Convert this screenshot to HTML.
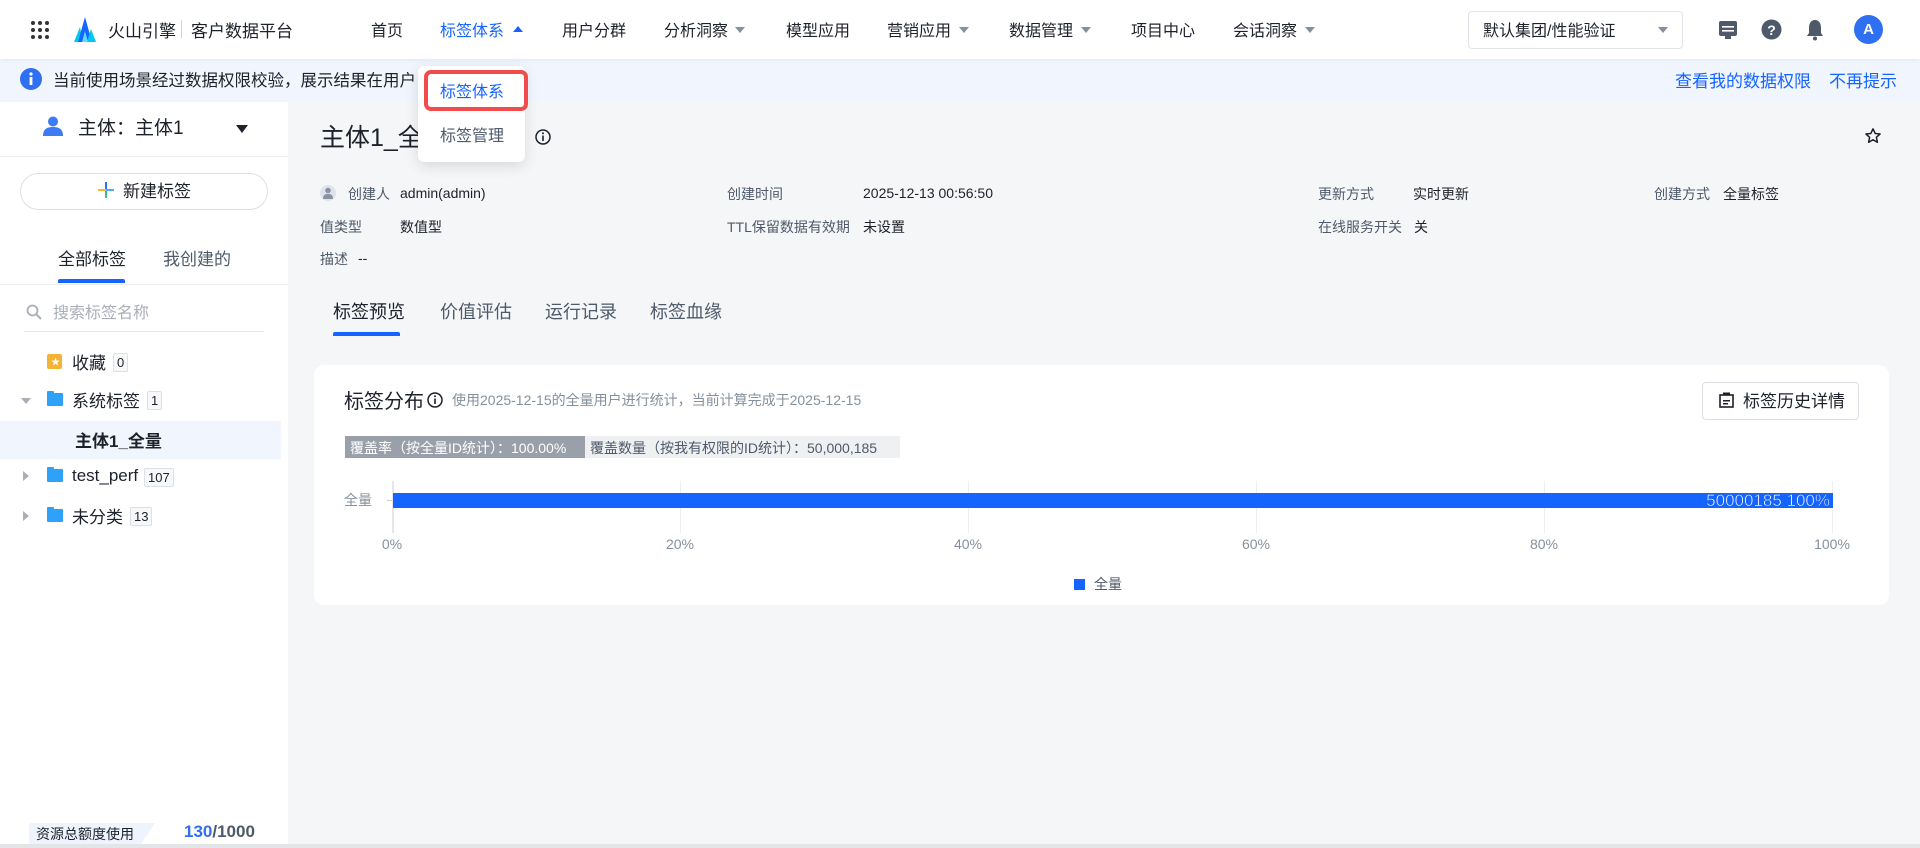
<!DOCTYPE html>
<html><head><meta charset="utf-8">
<style>
*{margin:0;padding:0;box-sizing:border-box}
body{width:1920px;height:848px;overflow:hidden;background:#f5f6f8;font-family:"Liberation Sans","Noto Sans CJK SC",sans-serif;color:#1d2129;position:relative}
.a{position:absolute;white-space:nowrap}
.hdr{position:absolute;left:0;top:0;width:1920px;height:59px;background:#fff;box-shadow:0 1px 4px rgba(0,0,0,.06);z-index:2}
.nav{font-size:16px;color:#1d2129;top:17px}
.tri{width:0;height:0;border-left:5px solid transparent;border-right:5px solid transparent;border-top:6px solid #86909c;position:absolute}
.meta{font-size:14px;color:#4e5969}
.val{font-size:14px;color:#1d2129}
.badge{font-size:13px;border:1px solid #dcdfe4;background:#f7f8fa;border-radius:2px;padding:0 3px;line-height:17px;color:#1d2129}
.folder{width:16px;height:13px;background:#2ea2f8;border-radius:1px;position:absolute}
.folder:before{content:"";position:absolute;left:0;top:-2px;width:7px;height:3px;background:#2ea2f8;border-radius:1px 1px 0 0}
.grid{position:absolute;top:481px;width:1px;height:52px;background:#eceef2}
.tick{position:absolute;top:536px;font-size:14px;color:#86909c;transform:translateX(-50%)}
</style></head><body>

<div class="hdr">
  <svg class="a" style="left:30px;top:20px" width="20" height="20" viewBox="0 0 20 20" fill="#333">
    <circle cx="3" cy="3" r="2"/><circle cx="10" cy="3" r="2"/><circle cx="17" cy="3" r="2"/>
    <circle cx="3" cy="10" r="2"/><circle cx="10" cy="10" r="2"/><circle cx="17" cy="10" r="2"/>
    <circle cx="3" cy="17" r="2"/><circle cx="10" cy="17" r="2"/><circle cx="17" cy="17" r="2"/>
  </svg>
  <svg class="a" style="left:74px;top:17px" width="22" height="25" viewBox="0 0 22 25">
    <path d="M0 25 L6 10 L9 25Z" fill="#00c8f0"/><path d="M4 25 L11 0 L18 25Z" fill="#1664ff"/><path d="M13 25 L17 12 L22 25Z" fill="#00c8f0"/><path d="M8 25 L11 14 L14 25Z" fill="#5fd9ff"/>
  </svg>
  <div class="a" style="left:108px;top:17px;font-size:17px;color:#1d2129">火山引擎</div>
  <div class="a" style="left:181px;top:20px;width:1px;height:18px;background:#d0d3d9"></div>
  <div class="a" style="left:191px;top:17px;font-size:17px;color:#1d2129">客户数据平台</div>

  <div class="a nav" style="left:371px">首页</div>
  <div class="a nav" style="left:440px;color:#1664ff">标签体系</div>
  <div class="a" style="left:513px;top:26px;width:0;height:0;border-left:5px solid transparent;border-right:5px solid transparent;border-bottom:6px solid #1664ff"></div>
  <div class="a nav" style="left:562px">用户分群</div>
  <div class="a nav" style="left:664px">分析洞察</div><div class="tri" style="left:735px;top:27px"></div>
  <div class="a nav" style="left:786px">模型应用</div>
  <div class="a nav" style="left:887px">营销应用</div><div class="tri" style="left:959px;top:27px"></div>
  <div class="a nav" style="left:1009px">数据管理</div><div class="tri" style="left:1081px;top:27px"></div>
  <div class="a nav" style="left:1131px">项目中心</div>
  <div class="a nav" style="left:1233px">会话洞察</div><div class="tri" style="left:1305px;top:27px"></div>

  <div class="a" style="left:1468px;top:11px;width:215px;height:38px;border:1px solid #e0e3e8;border-radius:4px"></div>
  <div class="a" style="left:1483px;top:17px;font-size:16px;color:#1d2129">默认集团/性能验证</div>
  <div class="tri" style="left:1658px;top:27px;border-top-color:#86909c"></div>

  <svg class="a" style="left:1718px;top:20px" width="20" height="20" viewBox="0 0 20 20"><rect x="1" y="1" width="18" height="15" rx="2" fill="#4e5969"/><rect x="7" y="16" width="6" height="3" fill="#4e5969"/><rect x="4" y="6" width="12" height="1.6" fill="#fff"/><rect x="4" y="10" width="12" height="1.6" fill="#fff"/></svg>
  <svg class="a" style="left:1761px;top:19px" width="21" height="21" viewBox="0 0 21 21"><circle cx="10.5" cy="10.5" r="10" fill="#4e5969"/><text x="10.5" y="16" font-size="14" font-weight="bold" fill="#fff" text-anchor="middle" font-family="Liberation Sans">?</text></svg>
  <svg class="a" style="left:1806px;top:19px" width="18" height="22" viewBox="0 0 18 22"><path d="M9 1 C4.5 1 3 5 3 9 L3 14 L1 17 L17 17 L15 14 L15 9 C15 5 13.5 1 9 1Z" fill="#4e5969"/><circle cx="9" cy="19.5" r="2" fill="#4e5969"/></svg>
  <div class="a" style="left:1854px;top:15px;width:29px;height:29px;border-radius:50%;background:#2f6ff2;color:#fff;font-size:15px;font-weight:bold;text-align:center;line-height:29px">A</div>
</div>

<!-- banner -->
<div class="a" style="left:0;top:59px;width:1920px;height:43px;background:#f0f5fe"></div>
<svg class="a" style="left:20px;top:68px" width="22" height="22" viewBox="0 0 22 22"><circle cx="11" cy="11" r="11" fill="#2f6ff2"/><rect x="9.6" y="9" width="2.8" height="8" fill="#fff"/><circle cx="11" cy="6" r="1.6" fill="#fff"/></svg>
<div class="a" style="left:53px;top:67px;font-size:16.5px;color:#1d2129">当前使用场景经过数据权限校验，展示结果在用户</div>
<div class="a" style="left:1675px;top:67px;font-size:17px;color:#1664ff">查看我的数据权限</div>
<div class="a" style="left:1829px;top:67px;font-size:17px;color:#1664ff">不再提示</div>

<!-- sidebar -->
<div class="a" style="left:0;top:102px;width:288px;height:746px;background:#fff"></div>
<svg class="a" style="left:43px;top:116px" width="20" height="20" viewBox="0 0 20 20"><circle cx="10" cy="5.5" r="5" fill="#3c7bf5"/><path d="M0 20 C0 13 4 11 10 11 C16 11 20 13 20 20Z" fill="#3c7bf5"/></svg>
<div class="a" style="left:78px;top:113px;font-size:19px;color:#1d2129">主体：主体1</div>
<div class="a" style="left:236px;top:125px;width:0;height:0;border-left:6px solid transparent;border-right:6px solid transparent;border-top:8px solid #1d2129"></div>
<div class="a" style="left:0;top:156px;width:288px;height:1px;background:#eceef2"></div>
<div class="a" style="left:20px;top:173px;width:248px;height:37px;border:1px solid #dcdfe4;border-radius:19px"></div>
<svg class="a" style="left:98px;top:182px" width="16" height="16" viewBox="0 0 16 16"><rect x="7" y="0" width="2" height="8" fill="#2f6ff2"/><rect x="7" y="8" width="2" height="8" fill="#3ac27a"/><rect x="0" y="7" width="8" height="2" fill="#f5b731"/><rect x="8" y="7" width="8" height="2" fill="#4fa8f5"/></svg>
<div class="a" style="left:123px;top:177px;font-size:17px;color:#1d2129">新建标签</div>
<div class="a" style="left:58px;top:245px;font-size:17px;color:#1d2129">全部标签</div>
<div class="a" style="left:163px;top:245px;font-size:17px;color:#4e5969">我创建的</div>
<div class="a" style="left:0;top:284px;width:288px;height:1px;background:#eceef2"></div>
<div class="a" style="left:58px;top:279px;width:67px;height:4px;background:#1664ff;border-radius:2px 2px 0 0"></div>
<svg class="a" style="left:26px;top:304px" width="16" height="16" viewBox="0 0 16 16"><circle cx="6.5" cy="6.5" r="5" fill="none" stroke="#a9aeb8" stroke-width="1.8"/><path d="M10.3 10.3 L15 15" stroke="#a9aeb8" stroke-width="2"/></svg>
<div class="a" style="left:53px;top:299px;font-size:16px;color:#a9aeb8">搜索标签名称</div>
<div class="a" style="left:24px;top:331px;width:240px;height:1px;background:#e5e6eb"></div>

<div class="a" style="left:47px;top:354px;width:15px;height:15px;background:#f5b335;border-radius:2px"></div>
<div class="a" style="left:51px;top:355px;font-size:9px;color:#fff">★</div>
<div class="a" style="left:72px;top:349px;font-size:17px">收藏</div>
<div class="a badge" style="left:113px;top:353px">0</div>

<div class="a" style="left:21px;top:398px;width:0;height:0;border-left:5px solid transparent;border-right:5px solid transparent;border-top:6px solid #a9aeb8"></div>
<div class="folder" style="left:47px;top:393px"></div>
<div class="a" style="left:72px;top:387px;font-size:17px">系统标签</div>
<div class="a badge" style="left:147px;top:391px">1</div>

<div class="a" style="left:0;top:421px;width:281px;height:38px;background:#f1f5fd"></div>
<div class="a" style="left:75px;top:427px;font-size:17px;font-weight:bold">主体1_全量</div>

<div class="a" style="left:23px;top:471px;width:0;height:0;border-top:5px solid transparent;border-bottom:5px solid transparent;border-left:6px solid #a9aeb8"></div>
<div class="folder" style="left:47px;top:469px"></div>
<div class="a" style="left:72px;top:466px;font-size:17px">test_perf</div>
<div class="a badge" style="left:144px;top:468px">107</div>

<div class="a" style="left:23px;top:511px;width:0;height:0;border-top:5px solid transparent;border-bottom:5px solid transparent;border-left:6px solid #a9aeb8"></div>
<div class="folder" style="left:47px;top:509px"></div>
<div class="a" style="left:72px;top:503px;font-size:17px">未分类</div>
<div class="a badge" style="left:130px;top:507px">13</div>

<svg class="a" style="left:29px;top:823px" width="126" height="21" viewBox="0 0 126 21"><path d="M3 0 H126 L112 21 H3 Q0 21 0 18 V3 Q0 0 3 0Z" fill="#eef3fd"/></svg>
<div class="a" style="left:36px;top:824px;font-size:14px;color:#1d2129">资源总额度使用</div>
<div class="a" style="left:184px;top:822px;font-size:17px;font-weight:bold;color:#4e5969"><span style="color:#2f6ff2">130</span>/1000</div>
<div class="a" style="left:0;top:844px;width:1920px;height:4px;background:#e3e5e8"></div>

<!-- main -->
<div class="a" style="left:320px;top:118px;font-size:25px;color:#1d2129">主体1_全</div>
<svg class="a" style="left:535px;top:129px" width="16" height="16" viewBox="0 0 16 16"><circle cx="8" cy="8" r="7" fill="none" stroke="#1d2129" stroke-width="1.5"/><rect x="7.2" y="6.5" width="1.6" height="5.5" fill="#1d2129"/><circle cx="8" cy="4.3" r="1" fill="#1d2129"/></svg>
<svg class="a" style="left:1864px;top:127px" width="18" height="18" viewBox="0 0 24 24"><path d="M12 2.5 L14.9 8.6 L21.5 9.3 L16.5 13.8 L17.9 20.4 L12 17 L6.1 20.4 L7.5 13.8 L2.5 9.3 L9.1 8.6Z" fill="none" stroke="#1d2129" stroke-width="2" stroke-linejoin="round"/></svg>

<div class="a" style="left:320px;top:185px;width:16px;height:16px;border-radius:50%;background:#dfe3ea"></div>
<svg class="a" style="left:323px;top:187px" width="10" height="12" viewBox="0 0 10 12"><circle cx="5" cy="3.5" r="2.8" fill="#8a93a3"/><path d="M0 12 C0 8 2 7 5 7 C8 7 10 8 10 12Z" fill="#8a93a3"/></svg>
<div class="a meta" style="left:348px;top:184px">创建人</div>
<div class="a val" style="left:400px;top:185px">admin(admin)</div>
<div class="a meta" style="left:320px;top:217px">值类型</div>
<div class="a val" style="left:400px;top:217px">数值型</div>
<div class="a meta" style="left:320px;top:249px">描述</div>
<div class="a val" style="left:358px;top:250px">--</div>
<div class="a meta" style="left:727px;top:184px">创建时间</div>
<div class="a val" style="left:863px;top:185px">2025-12-13 00:56:50</div>
<div class="a meta" style="left:727px;top:217px">TTL保留数据有效期</div>
<div class="a val" style="left:863px;top:217px">未设置</div>
<div class="a meta" style="left:1318px;top:184px">更新方式</div>
<div class="a val" style="left:1413px;top:184px">实时更新</div>
<div class="a meta" style="left:1318px;top:217px">在线服务开关</div>
<div class="a val" style="left:1414px;top:217px">关</div>
<div class="a meta" style="left:1654px;top:184px">创建方式</div>
<div class="a val" style="left:1723px;top:184px">全量标签</div>

<div class="a" style="left:333px;top:298px;font-size:18px;color:#1d2129">标签预览</div>
<div class="a" style="left:440px;top:298px;font-size:18px;color:#4e5969">价值评估</div>
<div class="a" style="left:545px;top:298px;font-size:18px;color:#4e5969">运行记录</div>
<div class="a" style="left:650px;top:298px;font-size:18px;color:#4e5969">标签血缘</div>
<div class="a" style="left:333px;top:332px;width:67px;height:4px;background:#1664ff;border-radius:2px 2px 0 0"></div>

<!-- card -->
<div class="a" style="left:314px;top:365px;width:1575px;height:240px;background:#fff;border-radius:10px"></div>
<div class="a" style="left:344px;top:385px;font-size:20px;color:#1d2129">标签分布</div>
<svg class="a" style="left:427px;top:392px" width="16" height="16" viewBox="0 0 16 16"><circle cx="8" cy="8" r="7" fill="none" stroke="#1d2129" stroke-width="1.5"/><rect x="7.2" y="6.5" width="1.6" height="5.5" fill="#1d2129"/><circle cx="8" cy="4.3" r="1" fill="#1d2129"/></svg>
<div class="a" style="left:452px;top:390px;font-size:14px;color:#86909c">使用2025-12-15的全量用户进行统计，当前计算完成于2025-12-15</div>
<div class="a" style="left:1702px;top:382px;width:157px;height:38px;border:1px solid #dcdfe4;border-radius:4px"></div>
<svg class="a" style="left:1719px;top:392px" width="15" height="16" viewBox="0 0 15 16"><rect x="1" y="3" width="13" height="12" fill="none" stroke="#1d2129" stroke-width="1.6"/><rect x="4" y="0.5" width="7" height="3" fill="#1d2129"/><rect x="4" y="8" width="7" height="1.5" fill="#1d2129"/><rect x="4" y="11" width="5" height="1.5" fill="#1d2129"/></svg>
<div class="a" style="left:1743px;top:387px;font-size:17px;color:#1d2129">标签历史详情</div>

<div class="a" style="left:345px;top:436px;width:240px;height:22px;background:#9aa0a9"></div>
<div class="a" style="left:350px;top:438px;font-size:14px;color:#fff">覆盖率（按全量ID统计）：100.00%</div>
<div class="a" style="left:585px;top:436px;width:315px;height:22px;background:#eff0f2"></div>
<div class="a" style="left:590px;top:438px;font-size:14px;color:#4e5969">覆盖数量（按我有权限的ID统计）：50,000,185</div>

<div class="grid" style="left:680px"></div><div class="grid" style="left:968px"></div><div class="grid" style="left:1256px"></div><div class="grid" style="left:1544px"></div><div class="grid" style="left:1832px"></div>
<div class="a" style="left:392px;top:481px;width:2px;height:52px;background:#e3e6ea"></div>
<div class="a" style="left:387px;top:500px;width:5px;height:1px;background:#c9cdd4"></div>
<div class="a" style="left:344px;top:490px;font-size:14px;color:#86909c">全量</div>
<div class="a" style="left:393px;top:493px;width:1440px;height:15px;background:#1664ff"></div>
<div class="a" style="left:1696px;top:491px;width:134px;text-align:right;font-size:17px;color:#fff;-webkit-text-stroke:0.6px #1664ff">50000185 100%</div>
<div class="tick" style="left:392px">0%</div><div class="tick" style="left:680px">20%</div><div class="tick" style="left:968px">40%</div><div class="tick" style="left:1256px">60%</div><div class="tick" style="left:1544px">80%</div><div class="tick" style="left:1832px">100%</div>
<div class="a" style="left:1074px;top:579px;width:11px;height:11px;background:#1664ff"></div>
<div class="a" style="left:1094px;top:574px;font-size:14px;color:#4e5969">全量</div>

<!-- dropdown -->
<div class="a" style="left:418px;top:66px;width:107px;height:96px;background:#fff;border-radius:6px;box-shadow:0 4px 14px rgba(0,0,0,.12);z-index:3"></div>
<div class="a" style="left:424px;top:70px;width:104px;height:41px;border:4px solid #f24b4b;border-radius:7px;z-index:4"></div>
<div class="a" style="left:440px;top:78px;font-size:16px;color:#1664ff;z-index:4">标签体系</div>
<div class="a" style="left:440px;top:122px;font-size:16px;color:#4e5969;z-index:4">标签管理</div>

</body></html>
